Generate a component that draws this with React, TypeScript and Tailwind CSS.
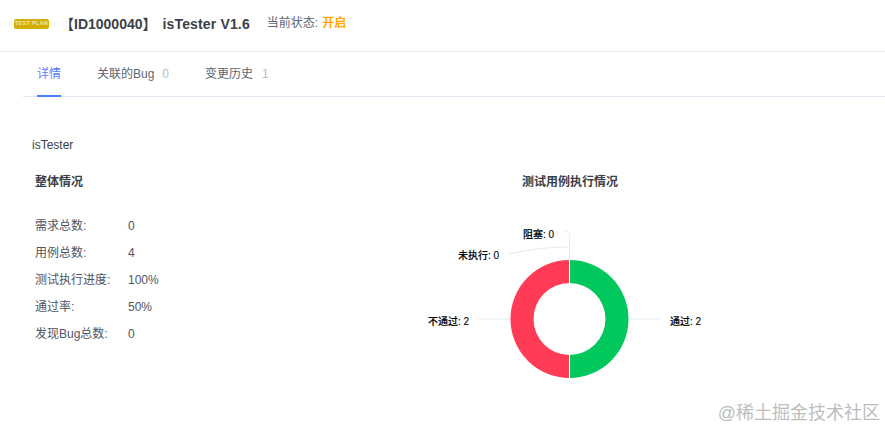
import React from 'react'

const font = { fontFamily: '"Liberation Sans", "Noto Sans CJK SC", sans-serif' }

const stats = [
  { label: '需求总数:', value: '0' },
  { label: '用例总数:', value: '4' },
  { label: '测试执行进度:', value: '100%' },
  { label: '通过率:', value: '50%' },
  { label: '发现Bug总数:', value: '0' },
]

function DonutChart() {
  return (
    <svg width="300" height="170" viewBox="420 215 300 170" className="block">
      {/* guide lines */}
      <g fill="none" stroke="#e4eaf3" strokeWidth="1">
        <path d="M569.5 260 L569.5 236 Q569.5 232 565 231" />
        <path d="M569.5 260 L569.5 250 Q569.5 247 565 247 Q540 247 509 254" />
        <path d="M510 319 L478 319" />
        <path d="M628 319 L661 319" />
      </g>
      {/* donut */}
      <path d="M569.5 260 A59 59 0 0 1 569.5 378 L569.5 355 A36 36 0 0 0 569.5 283 Z" fill="#00c85c" />
      <path d="M569.5 260 A59 59 0 0 0 569.5 378 L569.5 355 A36 36 0 0 1 569.5 283 Z" fill="#ff3b55" />
      <path d="M569.5 259 L569.5 284 M569.5 354 L569.5 379" stroke="#ffffff" strokeWidth="1" />
      <g fontSize="10" fill="#000000" fontWeight="500" stroke="#000000" strokeWidth="0.1" style={font}>
        <text x="523" y="238">阻塞: 0</text>
        <text x="458" y="259">未执行: 0</text>
        <text x="428" y="325">不通过: 2</text>
        <text x="670" y="325">通过: 2</text>
      </g>
    </svg>
  )
}

export default function App() {
  return (
    <div className="relative w-[885px] h-[430px] overflow-hidden bg-white" style={font}>
      {/* Header */}
      <div className="h-[52px] border-b border-[#e3e8ef] flex items-center pl-[14px] pb-[4px]">
        <div className="w-[35px] h-[10px] rounded-[2px] bg-[#d3ae05] flex items-center justify-center text-[5.5px] tracking-[0.3px] leading-none font-bold text-[#f5e9a8] whitespace-nowrap">
          TEST PLAN
        </div>
        <h1 className="ml-[11px] mt-[1px] text-[14px] font-bold text-[#3b3f49] whitespace-nowrap">
          【ID1000040】
          <span className="ml-[6px] tracking-[0.15px]">isTester V1.6</span>
        </h1>
        <span className="ml-[17px] -mt-[2px] text-[12px] text-[#5e6470] whitespace-nowrap">当前状态:</span>
        <span className="ml-[4px] -mt-[2px] text-[12px] font-bold text-[#ffa800] whitespace-nowrap">开启</span>
      </div>

      {/* Tabs */}
      <div className="ml-[23px] h-[45px] border-b border-[#dfe7f3] flex text-[12px] text-[#5e6470]">
        <div className="ml-[14px] w-[24px] h-[45px] border-b-2 border-[#4f7cff] text-[#4f7cff] pt-[13px] whitespace-nowrap">详情</div>
        <div className="ml-[36px] pt-[13px] whitespace-nowrap">
          关联的Bug<span className="ml-[8px] text-[#b4bcc8]">0</span>
        </div>
        <div className="ml-[36px] pt-[13px] whitespace-nowrap">
          变更历史<span className="ml-[9px] text-[#b4bcc8]">1</span>
        </div>
      </div>

      {/* Body */}
      <div className="pl-[32px] pt-[40px]">
        <p className="text-[12px] leading-[16px] text-[#3b3f49]">isTester</p>
        <div className="flex">
          <div className="w-[400px] pl-[3px]">
            <h2 className="mt-[21px] text-[12px] leading-[16px] font-bold text-[#3b3f49]">整体情况</h2>
            <div className="mt-[28px] flex flex-col gap-[11px]">
              {stats.map((s) => (
                <div key={s.label} className="flex h-[16px] text-[12px] leading-[16px] text-[#4f5562]">
                  <span className="w-[93px] whitespace-nowrap">{s.label}</span>
                  <span>{s.value}</span>
                </div>
              ))}
            </div>
          </div>
          <div className="flex-1">
            <h2 className="mt-[21px] ml-[90px] text-[12px] leading-[16px] font-bold text-[#3b3f49]">测试用例执行情况</h2>
            <div className="-ml-[12px] mt-[25px]">
              <DonutChart />
            </div>
          </div>
        </div>
      </div>

      {/* Watermark */}
      <div className="absolute right-[5px] bottom-[7px] text-[18px] leading-[20px] text-[#bdbdbd] whitespace-nowrap">
        @稀土掘金技术社区
      </div>
    </div>
  )
}
